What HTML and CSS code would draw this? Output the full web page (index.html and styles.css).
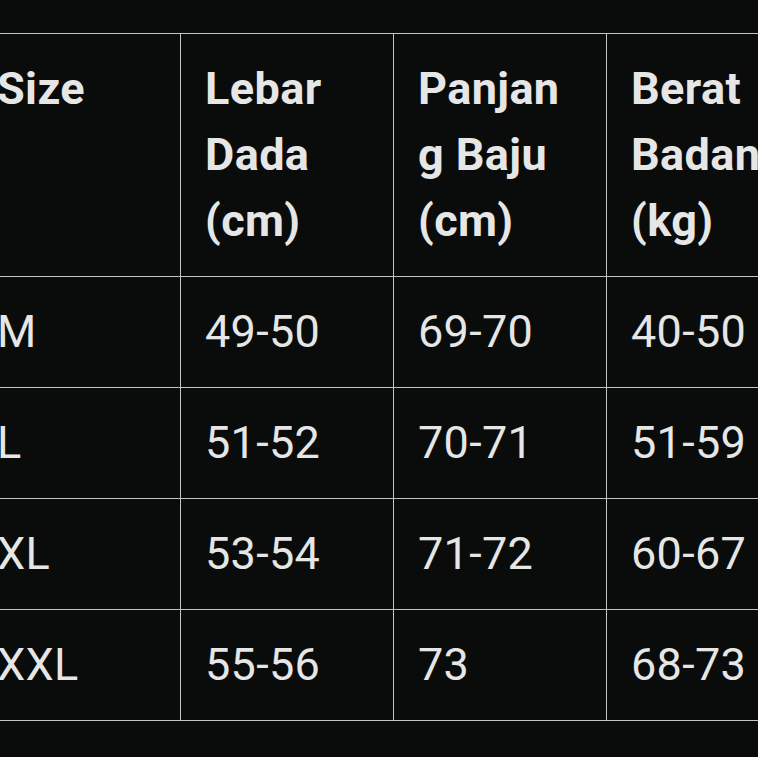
FILE: index.html
```html
<!DOCTYPE html>
<html lang="id">
<head>
<meta charset="utf-8">
<title>Size Chart</title>
<link rel="stylesheet" href="styles.css">
</head>
<body>
<table class="size-table">
  <colgroup>
    <col class="c-size">
    <col class="c-col">
    <col class="c-col">
    <col class="c-col">
  </colgroup>
  <thead>
    <tr>
      <th>Size</th>
      <th>Lebar Dada (cm)</th>
      <th>Panjang Baju (cm)</th>
      <th>Berat Badan (kg)</th>
    </tr>
  </thead>
  <tbody>
    <tr><td>M</td><td>49-50</td><td>69-70</td><td>40-50</td></tr>
    <tr><td>L</td><td>51-52</td><td>70-71</td><td>51-59</td></tr>
    <tr><td>XL</td><td>53-54</td><td>71-72</td><td>60-67</td></tr>
    <tr><td>XXL</td><td>55-56</td><td>73</td><td>68-73</td></tr>
  </tbody>
</table>
</body>
</html>
```

FILE: styles.css
```css
html, body {
  margin: 0;
  padding: 0;
  background: #090c0a;
  overflow: hidden;
}

body {
  font-family: Roboto, "Liberation Sans", sans-serif;
  color: #e6e6e6;
  padding-top: 33px;
}

.size-table {
  margin-left: -28px;
  border-collapse: collapse;
  table-layout: fixed;
  width: 847px;
}

.c-size { width: 208px; }
.c-col { width: 213px; }

.size-table th,
.size-table td {
  border: 1px solid #c4c4c4;
  padding: 22px 31px 22px 24px;
  font-size: 45px;
  line-height: 66px;
  text-align: left;
  vertical-align: top;
  overflow-wrap: anywhere;
}

.size-table th {
  font-weight: 700;
  letter-spacing: 0.4px;
}

.size-table td {
  font-weight: 400;
  letter-spacing: 0.3px;
}
```
